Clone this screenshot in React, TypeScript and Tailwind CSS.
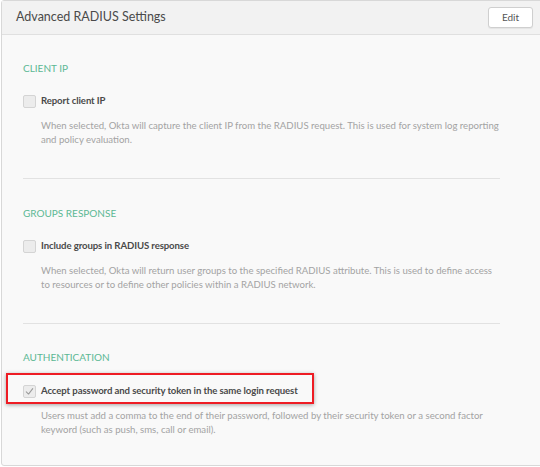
import React from 'react';

const Check = () => (
  <svg viewBox="0 0 14 14" className="h-[9px] w-[9px]" fill="none">
    <path d="M2 7.5 L5.5 11 L12 2.5" stroke="#9a9a9a" strokeWidth="1.6" strokeLinecap="round" strokeLinejoin="round" />
  </svg>
);

const Box = ({ checked }: { checked?: boolean }) => (
  <span className="flex h-[13px] w-[13px] shrink-0 items-center justify-center rounded-[2px] border border-[#d4d4d4] bg-[#ececec]">
    {checked && <Check />}
  </span>
);

const Section = ({
  title,
  label,
  desc,
  checked,
  highlight,
}: {
  title: string;
  label: string;
  desc: string;
  checked?: boolean;
  highlight?: boolean;
}) => (
  <div className="px-[21px]">
    <h3 className="h-[14px] text-[10px] leading-[14px] uppercase text-[#5cb894]">{title}</h3>
    <div className={`relative flex h-[13px] items-center gap-[5px] ${highlight ? 'mt-[21px]' : 'mt-[20px]'}`}>
      {highlight && (
        <span className="absolute left-[-17px] top-[-12px] h-[31px] w-[308px] border-2 border-[#ee1c24] shadow-[0_1px_4px_rgba(0,0,0,0.35)]" />
      )}
      <Box checked={checked} />
      <span className="text-[9.6px] font-bold tracking-[-0.1px] text-[#4a4a4a]">{label}</span>
    </div>
    <p className="mt-[11px] ml-[18px] w-[461px] text-[9.6px] leading-[14px] text-[#a3a3a3]">{desc}</p>
  </div>
);

const App = () => {
  return (
    <div className="h-[467px] w-[540px] overflow-hidden bg-white font-['Lato',sans-serif]">
      <div className="ml-px mr-[-4px] h-[466px] rounded-[3px] border border-[#d8d8d8] bg-[#f9f9f9]">
        {/* header */}
        <div className="flex h-[34px] items-center justify-between border-b border-[#e0e0e0] bg-[#f2f2f2] pl-[14px] pr-[10px]">
          <h2 className="text-[12.5px] text-[#4a4a4a]">Advanced RADIUS Settings</h2>
          <button className="h-[21px] w-[45px] rounded-[3px] border border-[#cfcfcf] bg-white text-[10px] text-[#555] shadow-[0_1px_1px_rgba(0,0,0,0.06)]">
            Edit
          </button>
        </div>

        <div className="pt-[26px]">
          <Section
            title="Client IP"
            label="Report client IP"
            desc="When selected, Okta will capture the client IP from the RADIUS request. This is used for system log reporting and policy evaluation."
          />
          <div className="mx-[21px] mt-[31px] mb-[27px] h-px w-[477px] bg-[#e2e2e2]" />
          <Section
            title="Groups Response"
            label="Include groups in RADIUS response"
            desc="When selected, Okta will return user groups to the specified RADIUS attribute. This is used to define access to resources or to define other policies within a RADIUS network."
          />
          <div className="mx-[21px] mt-[31px] mb-[26px] h-px w-[477px] bg-[#e2e2e2]" />
          <Section
            title="Authentication"
            label="Accept password and security token in the same login request"
            desc="Users must add a comma to the end of their password, followed by their security token or a second factor keyword (such as push, sms, call or email)."
            checked
            highlight
          />
        </div>
      </div>
    </div>
  );
};

export default App;
